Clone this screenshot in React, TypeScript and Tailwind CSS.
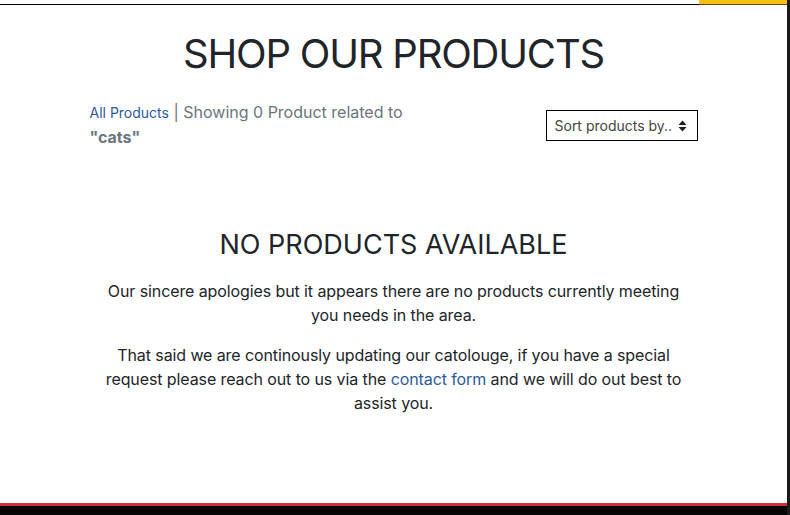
export default function App() {
  return (
    <div className="w-[790px] h-[515px] bg-white flex flex-col overflow-hidden font-['Inter',sans-serif]">
      <div className="flex flex-1 min-h-0">
        <div className="flex-1 flex flex-col min-w-0">
          {/* top strip */}
          <div className="flex h-[5px] shrink-0">
            <div className="flex-1 border-b border-black"></div>
            <div className="w-[88px] bg-[#fbbd12] border-b border-[#5a4a10]"></div>
          </div>

          <main className="flex-1 flex flex-col items-center">
            <h1 className="mt-[25px] text-[40px] leading-[48px] text-[#212529] tracking-[-1.2px]">
              SHOP OUR PRODUCTS
            </h1>

            <div className="w-[608px] mt-[22px] flex justify-between items-start">
              <p className="w-[320px] text-[16px] leading-[24px] text-[#6c757d]">
                <a className="text-[14px] text-[#2c5a9b]">All Products</a>{" "}
                <span>|</span> Showing 0 Product related to{" "}
                <b className="font-bold">"cats"</b>
              </p>
              <div className="mt-[10px] w-[152px] h-[31px] border border-black flex items-center justify-between pl-[8px] pr-[10px] text-[14px] text-[#444]">
                <span>Sort products by..</span>
                <svg width="9" height="12" viewBox="0 0 9 12">
                  <path d="M4.5 0.5L8.5 5H0.5Z" fill="#222" />
                  <path d="M4.5 11.5L8.5 7H0.5Z" fill="#222" />
                </svg>
              </div>
            </div>

            <h2 className="mt-[79px] text-[27px] leading-[34px] text-[#212529]">
              NO PRODUCTS AVAILABLE
            </h2>
            <div className="w-[590px] mt-[17px] text-center text-[16px] leading-[24px] text-[#212529] tracking-[-0.1px]">
              <p>
                Our sincere apologies but it appears there are no products currently meeting
                you needs in the area.
              </p>
              <p className="mt-[16px]">
                That said we are continously updating our catolouge, if you have a special
                request please reach out to us via the{" "}
                <a className="text-[#2c5a9b]">contact form</a> and we will do out best to
                assist you.
              </p>
            </div>
          </main>

          <div className="h-[3px] bg-[#d0303e] shrink-0"></div>
          <div className="h-[9px] bg-[#050505] shrink-0"></div>
        </div>
        <div className="w-[3px] bg-[#1a1a1a]"></div>
      </div>
    </div>
  );
}
